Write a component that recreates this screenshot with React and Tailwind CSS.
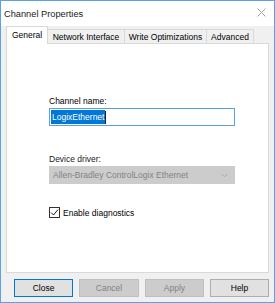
export default function App() {
  const font = "font-['Liberation_Sans',Arial,sans-serif]";
  return (
    <div className={`w-[275px] h-[303px] border border-[#5aa2e6] bg-[#f0f0f0] flex flex-col text-[8.5px] leading-[10px] text-black ${font}`}>
      <div className="h-[25px] shrink-0 bg-white flex items-center justify-between pl-[3px] pr-[8px]">
        <span className="text-[9.25px] leading-[12px] text-[#1a1a1a]">Channel Properties</span>
        <svg width="9" height="9" viewBox="0 0 9 9" className="mb-[3px]">
          <path d="M0.5 0.5 L8.5 8.5 M8.5 0.5 L0.5 8.5" stroke="#a0a0a0" strokeWidth="1" fill="none" />
        </svg>
      </div>
      <div className="h-[17px] shrink-0 flex items-end pl-[5px]">
        <div className="relative z-10 w-[42px] h-[18px] mb-[-1px] bg-white border-l border-t border-r border-[#d9d9d9] flex items-center justify-center pb-[1px]">
          General
        </div>
        <div className="w-[77px] h-[14px] bg-[#f0f0f0] border-t border-r border-[#d9d9d9] flex items-center justify-center">
          Network Interface
        </div>
        <div className="w-[82px] h-[14px] bg-[#f0f0f0] border-t border-r border-[#d9d9d9] flex items-center justify-center">
          Write Optimizations
        </div>
        <div className="w-[47px] h-[14px] bg-[#f0f0f0] border-t border-r border-[#d9d9d9] flex items-center justify-center">
          Advanced
        </div>
      </div>
      <div className="mx-[5px] h-[230px] shrink-0 bg-white border border-[#d9d9d9] flex flex-col pl-[42px] pt-[52px]">
        <div className="h-[10px]">Channel name:</div>
        <div className="mt-[2px] w-[186px] h-[18px] border border-[#5b9fe3] bg-white flex items-center pl-[1px]">
          <span className="bg-[#0078d7] text-white h-[14px] flex items-center px-[1px]">LogixEthernet</span>
          <span className="w-px h-[13px] bg-[#222]"></span>
        </div>
        <div className="mt-[28px] h-[10px] text-[#1a1a1a]">Device driver:</div>
        <div className="mt-[2px] w-[186px] h-[18px] border border-[#cccccc] bg-[#cccccc] flex items-center justify-between pl-[3px] pr-[6px] text-[#838383]">
          <span>Allen-Bradley ControlLogix Ethernet</span>
          <svg width="7" height="5" viewBox="0 0 7 5">
            <path d="M0.5 0.8 L3.5 3.8 L6.5 0.8" stroke="#a8a8a8" strokeWidth="1" fill="none" />
          </svg>
        </div>
        <div className="mt-[23px] flex items-center gap-[3px]">
          <div className="w-[11px] h-[11px] border border-[#333] bg-white flex items-center justify-center">
            <svg width="9" height="9" viewBox="0 0 9 9">
              <path d="M1 4.5 L3.5 7 L8 1.5" stroke="#222" strokeWidth="1" fill="none" />
            </svg>
          </div>
          <span>Enable diagnostics</span>
        </div>
      </div>
      <div className="mt-[6px] h-[18px] shrink-0 flex pl-[13px] gap-[6px]">
        <button className="w-[59px] h-[18px] border border-[#0078d7] bg-[#e1e1e1] flex items-center justify-center">Close</button>
        <button className="w-[60px] h-[18px] border border-[#bfbfbf] bg-[#cccccc] text-[#838383] flex items-center justify-center">Cancel</button>
        <button className="w-[59px] h-[18px] border border-[#bfbfbf] bg-[#cccccc] text-[#838383] flex items-center justify-center">Apply</button>
        <button className="w-[59px] h-[18px] border border-[#adadad] bg-[#e1e1e1] flex items-center justify-center">Help</button>
      </div>
    </div>
  );
}
